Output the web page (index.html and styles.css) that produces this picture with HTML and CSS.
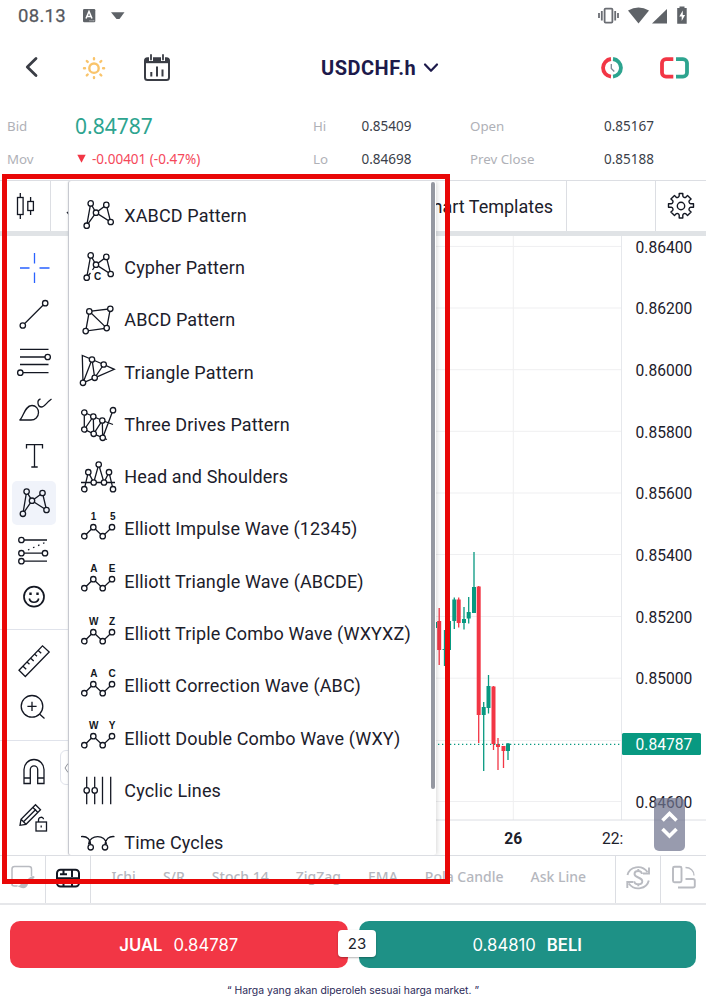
FILE: index.html
```html
<!DOCTYPE html>
<html lang="id">
<head>
<meta charset="utf-8">
<title>USDCHF.h</title>
<link rel="stylesheet" href="styles.css">
</head>
<body>
<div class="app">
  <div class="status">
    <span class="clock">08.13</span>
    <svg class="status-left" width="46" height="16" viewBox="81 8 46 16">
      <rect x="83" y="9" width="12.3" height="13.3" rx="1.2" fill="#5f6368"/>
      <path d="M86 18.5L89 11.5L92 18.5M87 16.5h4" fill="none" stroke="#fff" stroke-width="1.5"/>
      <path d="M89.5 20.8h1M91.5 20.8h1M93.3 20.8h1" stroke="#fff" stroke-width=".8"/>
      <path d="M111 12.2h13.5l-5 6.8h-3z" fill="#5f6368"/>
    </svg>
    <svg class="status-right" width="92" height="20" viewBox="597 6 92 20">
      <g fill="none" stroke="#6a6d73" stroke-width="1.8"><rect x="604.6" y="8.6" width="7.800" height="14" rx="1"/><path d="M601.8 11v9.500M599 13v5M615.200 11v9.500M618 13v5"/></g>
      <path d="M628 10.600Q638.500 4.500 649 10.600L638.500 23.500z" fill="#5f6368"/>
      <path d="M667 9v14.500h-15z" fill="#5f6368"/>
      <path d="M679.500 8v-1.500h5v1.500h2.200v15.700h-9.500v-15.700z" fill="#5f6368"/>
      <path d="M682.800 10.500l-3.500 6h2.400v4.500l3.400-6h-2.300z" fill="#fff"/>
    </svg>
  </div>

  <div class="header">
    <svg class="h-left" width="150" height="30" viewBox="22 53 150 30">
      <path d="M36 58.500L27.300 67L36 75.500" fill="none" stroke="#3a3d45" stroke-width="2.800" stroke-linecap="round" stroke-linejoin="round"/>
      <g fill="none" stroke="#f9c46b" stroke-width="2.400"><circle cx="94" cy="68.200" r="4.700"/>
      <path stroke-linecap="round" d="M94 58.200v1M94 77.100v1M84 68.200h1M103.100 68.200h1M86.800 61l.9.9M100.400 74.600l.9.9M86.800 75.400l.9-.9M100.400 61.900l.9-.9"/></g>
      <g fill="none" stroke="#3a3d45"><rect x="145" y="58.300" width="24" height="21.700" rx="2.500" stroke-width="2"/><path d="M145 60.700h24" stroke-width="5"/><path d="M151.300 72v4.500M157 66.500v10M162.500 69.500v7" stroke-width="2"/></g>
      <path d="M151 54v7M163 54v7" stroke="#fff" stroke-width="4"/><path d="M151 55v4.500M163 55v4.500" stroke="#3a3d45" stroke-width="1.800" stroke-linecap="round"/>
    </svg>
    <div class="pair"><span>USDCHF.h</span>
      <svg width="18" height="12" viewBox="0 0 18 12"><path d="M3 2.500L9 8.800L15 2.500" fill="none" stroke="#1d1a4b" stroke-width="2.200" stroke-linecap="round" stroke-linejoin="round"/></svg>
    </div>
    <svg class="h-right" width="92" height="26" viewBox="599 55 92 26">
      <g fill="none" stroke-width="3.800"><path d="M611 59A8.900 8.900 0 0 0 611 76.700" stroke="#f23645"/><path d="M613 59A8.900 8.900 0 0 1 613 76.700" stroke="#2da48f"/>
      <path d="M611.300 64v4.500l3 3" stroke="#7b8794" stroke-width="1.300"/>
      <path d="M673.300 59.100H666a4 4 0 0 0-4 4V72.700a4 4 0 0 0 4 4H673.300" stroke="#f23645"/><path d="M676 59.100H683a4 4 0 0 1 4 4V72.700a4 4 0 0 1-4 4H676" stroke="#2da48f"/></g>
    </svg>
  </div>

  <div class="quotes">
    <span class="k">Bid</span><span class="bid">0.84787</span><span class="k">Hi</span><span>0.85409</span><span class="k">Open</span><span>0.85167</span>
    <span class="k">Mov</span><span class="mov"><svg width="9" height="9" viewBox="0 0 9 9"><path d="M.3.800h8.400l-4.200 8z" fill="#f23645"/></svg>-0.00401 (-0.47%)</span><span class="k">Lo</span><span>0.84698</span><span class="k">Prev Close</span><span>0.85188</span>
  </div>

  <div class="toolbar">
    <div class="t-candle"><svg width="22" height="30" viewBox="15 191 22 30"><g fill="none" stroke="#131722" stroke-width="1.300"><rect x="17.500" y="197.500" width="5.600" height="17"/><path d="M20.300 193v4.500M20.300 214.500v4.500"/><rect x="27.800" y="201.500" width="5.600" height="9"/><path d="M30.600 197v4.500M30.600 210.500v4.500"/></g></svg></div>
    <div class="t-main"><svg width="6" height="6" viewBox="0 0 6 6"><path d="M1 1l3 3.500" stroke="#131722" stroke-width="1.300"/></svg><span>Chart Templates</span></div>
    <div class="t-blank"></div>
    <div class="t-gear"><svg width="28" height="28" viewBox="0 0 28 28"><g fill="none" stroke="#131722" stroke-width="1.400" stroke-linejoin="round"><circle cx="14" cy="14" r="3.700"/><path d="M12.200 1.500h3.600v2.300c0 1.300 2 2.300 3.200 1.300l1.500-1.700 3.600 3.600-1.700 1.500c-1 1.200 0 3.200 1.300 3.200h2.800v3.600h-2.800c-1.300 0-2.300 2-1.300 3.200l1.700 1.500-3.600 3.600-1.500-1.700c-1.200-1-3.200 0-3.200 1.300v2.800h-3.600v-2.800c0-1.300-2-2.300-3.200-1.300l-1.500 1.700-3.600-3.600 1.700-1.500c1-1.200 0-3.200-1.300-3.200h-2.800v-3.600h2.800c1.300 0 2.300-2 1.300-3.200l-1.700-1.500 3.600-3.600 1.500 1.700c1.200 1 3.200 0 3.200-1.300z"/></g></svg></div>
  </div>

  <div class="workspace">
    <div class="tools">
      <svg class="tool cross" viewBox="12 246 44 44"><path d="M34.500 253v10.500M34.500 272.500v10.500M20 268h9.500M39.500 268h10"/></svg>
      <svg class="tool" viewBox="12 293 44 44"><path d="M25 323.300L43 305.300"/><circle cx="22.800" cy="325.500" r="2.700"/><circle cx="45.200" cy="303.200" r="2.700"/></svg>
      <svg class="tool" viewBox="12 340 44 44"><path d="M20 349.300h28.500M20 357h25M20 364.500h28.500M23 372.700h25.500"/><circle cx="47.700" cy="357" r="2.700"/><circle cx="20.300" cy="372.700" r="2.700"/></svg>
      <svg class="tool" viewBox="12 387 44 44"><path d="M19.500 420c3.500-1.500 5-14.500 12.500-14.500c4 0 6.500 3.500 6.500 7c0 4.500-3.500 7.500-7.500 7.500zM40.500 399c-4 1-3 8 1 8c3 0 4.500-4 10-8"/></svg>
      <svg class="tool" viewBox="12 434 44 44"><path d="M26.500 448.500v-3.800h16v3.800M34.500 444.700v22M31.300 467h6.400"/></svg>
      <svg class="tool active" viewBox="12 481 44 44"><path d="M26.600 491.600L22.900 513.800M26.600 491.600L32 500.700M32 500.700L42.500 493M42.500 493L46.500 510M46.500 510L32 500.700M32 500.700L22.900 513.800"/><g class="node"><circle cx="26.600" cy="491.600" r="2.700"/><circle cx="42.500" cy="493" r="2.700"/><circle cx="32" cy="500.700" r="2.700"/><circle cx="46.500" cy="510" r="2.700"/><circle cx="22.900" cy="513.800" r="2.700"/></g></svg>
      <svg class="tool" viewBox="12 528 44 44"><path d="M24 540h23M24 553.200h18.500M24 561.200h23"/><path d="M28 550L45 542.500" stroke-dasharray="1.500 4"/><circle cx="21.400" cy="540" r="2.700"/><circle cx="21.400" cy="553.200" r="2.700"/><circle cx="45" cy="553.200" r="2.700"/><circle cx="21.400" cy="561.200" r="2.700"/></svg>
      <svg class="tool" viewBox="12 575 44 44"><circle cx="34" cy="596.700" r="10" stroke-width="1.700"/><path d="M29.300 598.500c1 5 8.400 5 9.400 0" stroke-width="1.600"/><path d="M30.500 592.500v2.400M37.500 592.500v2.400" stroke-width="2.400"/></svg>
      <hr>
      <svg class="tool" viewBox="12 639 44 44"><path d="M19 670.300L42.500 645.800L49.200 652L25.300 676.500zM23 666.200l3.200 3M27 662l2.500 2.300M30.500 658l3.200 3M34.500 654l2.500 2.300M38 650.200l3.200 3"/></svg>
      <svg class="tool" viewBox="12 686 44 44"><circle cx="32" cy="706.300" r="10.800"/><path d="M39.500 714l5 4.500M32 701.700v9.200M27.400 706.300h9.200"/></svg>
      <hr>
      <svg class="tool" viewBox="12 750 44 44"><path d="M24 783.500V769.500a10 10 0 0 1 20 0V783.500H37.700V769.500a3.700 3.700 0 0 0-7.400 0V783.500zM24 778h6.300M37.700 778H44"/></svg>
      <svg class="tool" viewBox="12 797 44 44"><path d="M20 825.300l1-6L35.500 804.700l5 5L26 824.300zM21 819.300l5 5M32.700 807.300l5 5M24 821.300L36 809.300"/><rect x="36" y="822" width="10.500" height="9" fill="#fff"/><path d="M38.500 822v-2c0-3.500 5-3.500 5-.8M41.200 825.500v2"/></svg>
    </div>

    <svg class="chart" viewBox="68 236 638 620" width="638" height="620">
      <path d="M68 246.400H621M68 308H621M68 369.700H621M68 431.300H621M68 493H621M68 554.500H621M68 616.500H621M68 678.200H621M68 740.500H621M68 801.500H621M513.300 236V820" stroke="#efeff1" fill="none"/>
      <path d="M621.500 236V820" stroke="#e6e8ec" fill="none"/><path d="M68 820H706" stroke="#dcdee3" fill="none"/>
      <g class="up">
        <path d="M444.500 630v36M454.300 597.500v31.500M464 607v22.500M468.700 597v26.500M474 552v40M483.700 702v69M488.500 675v38.500M508 743v17"/>
        <path class="bar" d="M435 622v6M449 621v29M454.300 599.500v21.500M464 619v4M468.700 612v6.500M474 587v26M483.700 707v8M488.500 686v22M508 743.500v7.500M444.500 649v1"/>
      </g>
      <g class="down">
        <path d="M439.200 608v57M458.700 597.500v30M478.700 586v57M478.700 715v28M493.500 686v64M498 738v32M503.500 746v22"/>
        <path class="bar" d="M439.200 621v29M458.700 599.500v23.500M478.700 586.500v128.500M493.500 686.500v57.500M498 744v3M503.500 746v5"/>
      </g>
      <path d="M438 744.300H621" stroke="#089981" stroke-width="1.300" stroke-dasharray="1.300 2.700"/>
      <g class="price">
        <text x="635.500" y="252.500">0.86400</text><text x="635.500" y="314.200">0.86200</text><text x="635.500" y="375.800">0.86000</text><text x="635.500" y="437.500">0.85800</text><text x="635.500" y="499.200">0.85600</text><text x="635.500" y="560.800">0.85400</text><text x="635.500" y="622.500">0.85200</text><text x="635.500" y="684.200">0.85000</text><text x="635.500" y="808">0.84600</text>
        <rect x="622" y="733" width="79" height="22" rx="1.500" fill="#089981"/><text class="now" x="635.500" y="750">0.84787</text>
        <text class="day" x="504.300" y="844">26</text><text x="602" y="844">22:</text>
      </g>
      <g fill="none" stroke="#fff" stroke-width="3.600"><rect x="654" y="798" width="31" height="53" rx="5" fill="#70748f" fill-opacity=".72" stroke="none"/><path d="M662.500 820.500L669.500 813.500L676.500 820.500M662.500 829L669.500 836L676.500 829"/></g>
    </svg>
    <div class="collapse"><svg width="5" height="10" viewBox="0 0 5 10"><path d="M4 .5L1 5L4 9.500" fill="none" stroke="#8d9099"/></svg></div>

    <div class="menu">
      <div class="item"><svg class="ico" viewBox="0 0 36 36"><path d="M6.700 28.700L10.700 6.400L16 15.700L26.300 7.900L30.700 25L16 15.700z"/><g class="node"><circle cx="10.700" cy="6.400" r="2.700"/><circle cx="26.300" cy="7.900" r="2.700"/><circle cx="16" cy="15.700" r="2.700"/><circle cx="30.700" cy="25" r="2.700"/><circle cx="6.700" cy="28.700" r="2.700"/></g></svg>XABCD Pattern</div>
      <div class="item"><svg class="ico" viewBox="0 0 36 36"><path d="M12.500 21L16 15.700L30.700 25L26.300 7.900L16 15.700L10.700 6.400L6.700 28.700L10.500 24"/><g class="node"><circle cx="10.700" cy="6.400" r="2.700"/><circle cx="26.300" cy="7.900" r="2.700"/><circle cx="16" cy="15.700" r="2.700"/><circle cx="30.700" cy="25" r="2.700"/><circle cx="6.700" cy="28.700" r="2.700"/></g><text x="17.700" y="30.500">C</text></svg>Cypher Pattern</div>
      <div class="item"><svg class="ico" viewBox="0 0 36 36"><path d="M9.300 9.400L30.300 6.800L26.700 26.100L5.700 29.100L9.300 9.400L26.700 26.100"/><g class="node"><circle cx="9.300" cy="9.400" r="2.700"/><circle cx="30.300" cy="6.800" r="2.700"/><circle cx="26.700" cy="26.100" r="2.700"/><circle cx="5.700" cy="29.100" r="2.700"/></g></svg>ABCD Pattern</div>
      <div class="item"><svg class="ico" viewBox="0 0 36 36"><path d="M3 28.800L2.300 1.500L12 5.500L23.700 10.500L34.300 15.300L14.700 23.800L3 28.800L12 5.500L14.700 23.800L23.700 10.500"/><g class="node"><circle cx="12" cy="5.500" r="2.700"/><circle cx="23.700" cy="10.500" r="2.700"/><circle cx="14.700" cy="23.800" r="2.700"/><circle cx="3" cy="28.800" r="2.700"/></g></svg>Triangle Pattern</div>
      <div class="item"><svg class="ico" viewBox="0 0 36 36"><path d="M4.300 6.500V23.500L13.300 10.500L13.700 27.800L22.300 14.500L22.700 31.800L33 4.200M4.300 6.500L13.300 10.500L22.300 14.500L33 18.500M1.500 22L13.700 27.800L27 33.500"/><g class="node"><circle cx="4.300" cy="6.500" r="2.700"/><circle cx="13.300" cy="10.500" r="2.700"/><circle cx="22.300" cy="14.500" r="2.700"/><circle cx="33" cy="4.200" r="2.700"/><circle cx="4.300" cy="23.500" r="2.700"/><circle cx="13.700" cy="27.800" r="2.700"/><circle cx="22.700" cy="31.800" r="2.700"/></g></svg>Three Drives Pattern</div>
      <div class="item"><svg class="ico" viewBox="0 0 36 36"><path d="M4.300 30.200L8.300 13.200L13.700 23.500L18.700 5.500L24 23.500L29 13.200L33 30.200M1 23.500H35"/><g class="node"><circle cx="4.300" cy="30.200" r="2.700"/><circle cx="8.300" cy="13.200" r="2.700"/><circle cx="13.700" cy="23.500" r="2.700"/><circle cx="18.700" cy="5.500" r="2.700"/><circle cx="24" cy="23.500" r="2.700"/><circle cx="29" cy="13.200" r="2.700"/><circle cx="33" cy="30.200" r="2.700"/></g></svg>Head and Shoulders</div>
      <div class="item"><svg class="ico" viewBox="0 0 36 36"><use href="#wave"/><text x="13.500" y="8.600">1</text><text x="32.700" y="8.600">5</text></svg>Elliott Impulse Wave (12345)</div>
      <div class="item"><svg class="ico" viewBox="0 0 36 36"><use href="#wave"/><text x="13.800" y="8.600">A</text><text x="32" y="8.600">E</text></svg>Elliott Triangle Wave (ABCDE)</div>
      <div class="item"><svg class="ico" viewBox="0 0 36 36"><use href="#wave"/><text x="13.800" y="8.600">W</text><text x="32" y="8.600">Z</text></svg>Elliott Triple Combo Wave (WXYXZ)</div>
      <div class="item"><svg class="ico" viewBox="0 0 36 36"><use href="#wave"/><text x="13.800" y="8.600">A</text><text x="32" y="8.600">C</text></svg>Elliott Correction Wave (ABC)</div>
      <div class="item"><svg class="ico" viewBox="0 0 36 36"><use href="#wave"/><text x="13.800" y="8.600">W</text><text x="32" y="8.600">Y</text></svg>Elliott Double Combo Wave (WXY)</div>
      <div class="item"><svg class="ico" viewBox="0 0 36 36"><path d="M6.700 4.700v27.600M14.700 4.700v27.600M22.500 4.700v27.600M30.700 4.700v27.600"/><g class="node"><circle cx="6.700" cy="18.400" r="2.700"/><circle cx="14.700" cy="18.400" r="2.700"/></g></svg>Cyclic Lines</div>
      <div class="item"><svg class="ico" viewBox="0 0 36 36"><path d="M1 11.600C6.500 11 10 14 10.700 19.500M8.500 19.500C9.500 9 26 9 26.500 19.500M25 19.500C25.500 14 29 11 34.500 11.600"/><g class="node"><circle cx="10.700" cy="22.300" r="2.700"/><circle cx="25" cy="22.300" r="2.700"/></g></svg>Time Cycles</div>
      <div class="thumb"></div>
    </div>
  </div>

  <div class="indicators">
    <div class="i-edit"><svg width="28" height="28" viewBox="8 864 28 28"><path d="M12 884.500h-1v-15.500a2.500 2.500 0 0 1 2.500-2.500h14.500a2.500 2.500 0 0 1 2.500 2.500v7M11 884.500q0 1.500 2.500 1.500h3" fill="none" stroke="#b9bbc1" stroke-width="1.500"/><path d="M16 885.500c4 1.500 3-3 7-3.500l7-5.500q4-1.500 3.500 1l-6.500 6.500c-1 5-6 5.500-11 1.500z" fill="#b9bbc1"/></svg></div>
    <div class="i-grid"><svg width="26" height="20" viewBox="55 868 26 20"><g fill="none" stroke="#131722" stroke-width="2"><rect x="57" y="869.800" width="22" height="16.800" rx="3.500"/><path d="M57 878.300h22M63.500 870v4M72 870v7M63.500 882v4.500M72 880v6.500M60 874.300h7M69 882.300h7"/></g></svg></div>
    <div class="i-list"><span>Ichi</span><span>S/R</span><span>Stoch 14</span><span>ZigZag</span><span>EMA</span><span>Pola Candle</span><span>Ask Line</span></div>
    <div class="i-cur"><svg width="28" height="26" viewBox="624 865 28 26"><g fill="none" stroke="#b9bbc1" stroke-width="1.900"><path d="M627.500 875c2-8.500 14-11 20-3M649 867.500v6h-6M648.800 880.500c-2 8.500-14 11-20 3M627.300 888v-6h6"/><path d="M642 874c-.5-4-7.500-4-7.500 0s7.800 3 7.800 7.200c0 4-7.800 4-8 0M638.300 869v2.500M638.300 883.700v2.500"/></g></svg></div>
    <div class="i-rot"><svg width="26" height="26" viewBox="671 865 26 26"><g fill="none" stroke="#b9bbc1" stroke-width="1.900"><rect x="673" y="866.800" width="8.500" height="15.500" rx="1.500"/><path d="M678 887.500h15a1.800 1.800 0 0 0 1.800-1.800v-4.900a1.800 1.800 0 0 0-1.800-1.800h-7.500"/><path d="M685.500 867.500c5 0 8.500 3.500 8.500 8" stroke-width="1.300"/></g></svg></div>
  </div>

  <div class="orders">
    <div class="btn sell"><b>JUAL</b><span>0.84787</span></div>
    <div class="btn buy"><span>0.84810</span><b>BELI</b></div>
    <div class="spread">23</div>
  </div>
  <div class="note">“ Harga yang akan diperoleh sesuai harga market. ”</div>

  <div class="frame"></div>
</div>
<svg width="0" height="0" class="defs"><defs><g id="wave"><path d="M4.300 25.200L13.300 16.200L22.700 25.200L32 16.200"/><g fill="#fff"><circle cx="4.300" cy="25.200" r="2.700"/><circle cx="13.300" cy="16.200" r="2.700"/><circle cx="22.700" cy="25.200" r="2.700"/><circle cx="32" cy="16.200" r="2.700"/></g></g></defs></svg>
</body>
</html>
```
FILE: styles.css
```css
* { box-sizing: border-box; }
body { margin: 0; background: #fff; font-family: Roboto, "Liberation Sans", sans-serif; color: #1c202b; }
svg { display: block; flex: none; }
.app { position: relative; width: 706px; height: 1006px; overflow: hidden; display: flex; flex-direction: column; }
.defs { position: absolute; }

.status { height: 32px; display: flex; align-items: center; padding: 0 17px 0 18px; }
.clock { width: 63px; font-size: 18.500px; font-weight: 400; line-height: 32px; letter-spacing: .3px; color: #55585e; -webkit-text-stroke: .25px #55585e; }
.status-right { margin-left: auto; }

.header { height: 72px; display: flex; align-items: center; padding: 0 15px 0 22px; }
.pair { display: flex; align-items: center; gap: 6px; margin-left: 149px; font-size: 20px; font-weight: 700; letter-spacing: .5px; color: #1d1a4b; }
.h-right { margin-left: auto; }

.quotes { height: 76px; padding: 6px 0 5px 7px; display: grid; grid-template-columns: 68px 238px 48.500px 108.500px 134px 1fr; grid-template-rows: 32.500px 32.500px; align-items: center; font: 400 13.500px/20px "Noto Sans", sans-serif; color: #3b3f4a; }
.k { font-size: 13.300px; color: #afb1b7; }
.bid { font-size: 21px; color: #2da48f; }
.mov { display: flex; align-items: center; gap: 6px; padding-left: 2px; color: #f5485a; }

.toolbar { height: 56px; display: flex; border-top: 1px solid #dcdee3; border-bottom: 5px solid #e0e3e6; font-size: 18px; }
.toolbar > div { display: flex; align-items: center; }
.t-candle { width: 51px; padding-left: 15px; border-right: 1px solid #dcdee3; }
.t-main { width: 516px; padding: 0 13px 0 15px; justify-content: space-between; border-right: 1px solid #dcdee3; }
.t-main svg { margin-top: 16px; }
.t-blank { width: 89px; border-right: 1px solid #dcdee3; }
.t-gear { padding-left: 11px; }

.workspace { position: relative; height: 619px; display: flex; background: #fff; }
.tools { width: 68px; height: 619px; padding: 10px 0 0 12px; display: flex; flex-direction: column; gap: 3px; }
.tool { width: 44px; height: 44px; fill: none; stroke: #131722; stroke-width: 1.300; }
.tool.cross { stroke: #2962ff; }
.tool.active { background: #f0f3fa; border-radius: 5px; }
.tool.active .node { fill: #f0f3fa; }
.tools hr { width: 68px; height: 1px; margin: 7px 0 6px -12px; border: 0; background: #e0e3eb; flex: none; }
.chart { width: 638px; height: 620px; }
.up { stroke: #089981; fill: none; }
.down { stroke: #f23645; fill: none; }
.up > path, .down > path { stroke-width: 1.300; }
.up > .bar, .down > .bar { stroke-width: 4; }
.price { font-size: 15.600px; fill: #1c202b; }
.price .now { fill: #fff; }
.price .day { font-weight: 700; }
.collapse { position: absolute; left: 60px; top: 514px; width: 12px; height: 35px; border: 1px solid #e0e3eb; border-radius: 6px 0 0 6px; display: flex; align-items: center; padding-left: 3px; background: #fff; }

.menu { position: absolute; left: 69px; top: -55px; width: 367px; height: 674px; padding: 8px 0 0 11px; overflow: hidden; background: #fff; border-radius: 2px; box-shadow: -1px 0 1px #c3c5cc, 1px 0 5px rgba(0,0,0,.16); clip-path: inset(0 -6px 0 -6px); }
.item { height: 52.300px; display: flex; align-items: center; gap: 8.300px; font-size: 18px; white-space: nowrap; letter-spacing: .14px; }
.ico { width: 36px; height: 36px; overflow: visible; fill: none; stroke: #131722; stroke-width: 1.300; }
.node { fill: #fff; }
.ico text { font: 700 10px "Liberation Sans", sans-serif; letter-spacing: 0; text-anchor: middle; fill: #131722; stroke: none; }
.thumb { position: absolute; right: 1px; top: 1px; width: 4px; height: 607px; border-radius: 2px; background: #9598a1; }

.indicators { height: 50px; display: flex; border-top: 1px solid #dcdee3; border-bottom: 2px solid #e6e7ea; }
.indicators > div { display: flex; align-items: center; justify-content: center; padding-bottom: 3px; border-right: 1px solid #dcdee3; }
.indicators .i-edit { width: 46px; }
.indicators .i-grid { width: 45px; }
.indicators .i-list { width: 525px; justify-content: flex-start; gap: 27px; padding: 0 0 6px 20.500px; font: 500 14px/20px "Noto Sans", sans-serif; color: #b5b7be; white-space: nowrap; }
.indicators .i-cur { width: 45px; }
.indicators .i-rot { width: 45px; border: 0; }

.orders { position: relative; margin: 16px 10px 0; height: 47px; display: flex; gap: 11px; font: 400 16.700px Inter, sans-serif; }
.btn { width: 337.500px; display: flex; align-items: center; justify-content: center; gap: 11px; border-radius: 10px; color: #fff; }
.btn b { font-weight: 600; }
.sell { background: #f23645; }
.buy { background: #1e9186; }
.spread { position: absolute; left: 328px; top: 9px; width: 38px; height: 27px; border-radius: 4px; background: #fff; color: #20232d; font-size: 15px; line-height: 27px; text-align: center; box-shadow: 0 1px 2px rgba(0,0,0,.3); }
.note { margin-top: 16px; text-align: center; font: 400 10.400px/14px Inter, sans-serif; color: #2b2958; }
.frame { position: absolute; left: 2px; top: 174px; width: 448px; height: 710px; border: 5px solid #e90707; }
```
